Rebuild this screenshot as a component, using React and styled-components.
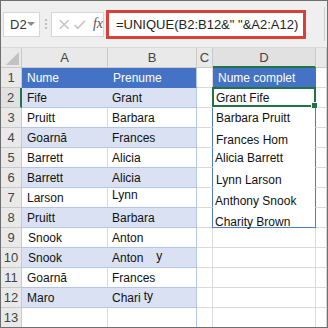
import React from "react";
import styled, { createGlobalStyle } from "styled-components";

const GlobalStyle = createGlobalStyle`
  body {
    margin: 0;
    background: #fff;
    font-family: "Liberation Sans", Arial, sans-serif;
  }
`;

const Frame = styled.div`
  width: 328px;
  height: 328px;
  box-sizing: border-box;
  border: 1px solid #6f6f6f;
  overflow: hidden;
  background: #fff;
  display: flex;
  flex-direction: column;
`;

const FormulaBar = styled.div`
  height: 47px;
  flex-shrink: 0;
  box-sizing: border-box;
  background: #efefef;
  display: flex;
  align-items: center;
  padding-left: 2px;
  border-bottom: 1px solid #dadada;
`;

const NameBox = styled.div`
  width: 37px;
  height: 25px;
  box-sizing: border-box;
  background: #fff;
  border: 1px solid #d6d6d6;
  display: flex;
  align-items: center;
  justify-content: space-between;
  padding: 0 4px 0 6px;
  font-size: 13px;
  color: #333;
`;

const Caret = styled.span`
  width: 0;
  height: 0;
  border-left: 4px solid transparent;
  border-right: 4px solid transparent;
  border-top: 4px solid #8a8a8a;
`;

const Dots = styled.div`
  width: 11px;
  display: flex;
  flex-direction: column;
  align-items: center;
  gap: 2px;
  span {
    width: 2px;
    height: 2px;
    background: #bdbdbd;
  }
`;

const FxBox = styled.div`
  width: 53px;
  height: 25px;
  box-sizing: border-box;
  background: #fff;
  border: 1px solid #d6d6d6;
  display: flex;
  align-items: center;
  padding-left: 6px;
  gap: 3px;
`;

const Fx = styled.span`
  font-family: "Liberation Serif", "Times New Roman", serif;
  font-style: italic;
  font-size: 14px;
  color: #555;
  margin-left: 3px;
`;

const FormulaBox = styled.div`
  width: 200px;
  height: 29px;
  margin-left: 2px;
  box-sizing: border-box;
  background: #fff;
  border: 3px solid #d8413a;
  display: flex;
  align-items: center;
  padding-left: 7px;
  font-size: 13px;
  color: #222;
  white-space: nowrap;
`;

const BarTail = styled.div`
  flex: 1;
  align-self: stretch;
  border-right: 1px solid #d0d0d0;
  margin: 6px 2px 6px 0;
`;

const Grid = styled.div`
  display: grid;
  grid-template-columns: 21px 86px 89px 16px 103px 1fr;
  grid-auto-rows: 20px;
`;

const Corner = styled.div`
  background: #e9e9e9;
  border-right: 1px solid #c9c9c9;
  border-bottom: 1px solid #c9c9c9;
  position: relative;
  &::after {
    content: "";
    position: absolute;
    right: 2px;
    bottom: 2px;
    border-left: 13px solid transparent;
    border-bottom: 13px solid #c2c2c2;
  }
`;

const ColHead = styled.div`
  background: ${(p) => (p.$selected ? "#e1e1e1" : "#e9e9e9")};
  border-right: 1px solid #c9c9c9;
  border-bottom: ${(p) => (p.$selected ? "2px solid #217346" : "1px solid #c9c9c9")};
  box-sizing: border-box;
  display: flex;
  align-items: center;
  justify-content: center;
  font-size: 13px;
  color: #444;
`;

const RowHead = styled.div`
  background: ${(p) => (p.$selected ? "#e1e1e1" : "#e9e9e9")};
  border-right: ${(p) => (p.$selected ? "2px solid #217346" : "1px solid #c9c9c9")};
  border-bottom: 1px solid #c9c9c9;
  box-sizing: border-box;
  display: flex;
  align-items: center;
  justify-content: center;
  font-size: 13px;
  color: #444;
`;

const Cell = styled.div`
  box-sizing: border-box;
  display: flex;
  align-items: flex-end;
  padding: 0 0 2px ${(p) => p.$pad ?? 4}px;
  font-size: 12px;
  line-height: 14px;
  white-space: nowrap;
  color: #111;
  background: #fff;
  border-right: 1px solid #dadada;
  border-bottom: 1px solid #dadada;
`;

const TableCell = styled(Cell)`
  background: ${(p) => (p.$head ? "#4472c4" : p.$band ? "#d9e1f2" : "#fff")};
  color: ${(p) => (p.$head ? "#fff" : "#111")};
  border-bottom: 1px solid ${(p) => (p.$head ? "#4472c4" : "#b4c6e7")};
  border-right: 1px solid
    ${(p) => (p.$last ? "#b4c6e7" : p.$head ? "#4472c4" : p.$band ? "#d9e1f2" : "#dadada")};
`;

const SpillCell = styled(Cell)`
  border-left: 1px solid #4f7ac7;
  border-right: 1px solid #4f7ac7;
  border-bottom: 1px solid ${(p) => (p.$end ? "#4f7ac7" : "#fff")};
  margin-left: -1px;
  padding-left: ${(p) => p.$pad ?? 3}px;
  position: relative;
`;

const Selection = styled.div`
  position: absolute;
  left: -1px;
  top: -1px;
  right: -1px;
  bottom: 0;
  border: 2px solid #217346;
  pointer-events: none;
  &::after {
    content: "";
    position: absolute;
    right: -4px;
    bottom: -4px;
    width: 5px;
    height: 5px;
    background: #217346;
    border: 1px solid #fff;
  }
`;

const Shift = styled.span`
  position: relative;
`;

const rows = [
  { a: "Fife", b: "Grant", d: "Grant Fife" },
  { a: "Pruitt", b: "Barbara", d: "Barbara Pruitt", dd: 0 },
  { a: "Goarnă", b: "Frances", d: "Frances Hom", dd: 2 },
  { a: "Barrett", b: "Alicia", d: "Alicia Barrett", dd: 0, dp: 2 },
  { a: "Barrett", b: "Alicia", d: "Lynn Larson", dd: 2 },
  { a: "Larson", b: "Lynn", by: -3, d: "Anthony Snook", dd: 3, dp: 2 },
  { a: "Pruitt", b: "Barbara", d: "Charity Brown", dd: 4, dp: 2 },
  { a: "Snook", ap: 6, b: "Anton" },
  { a: "Snook", ap: 6, b: "Anton", tail: "y" },
  { a: "Goarnă", b: "Frances" },
  { a: "Maro", b: "Chari", tail2: "ty" },
  { a: "", b: "" },
];

export default function App() {
  return (
    <>
      <GlobalStyle />
      <Frame>
        <FormulaBar>
          <NameBox>
            D2 <Caret />
          </NameBox>
          <Dots>
            <span />
            <span />
            <span />
          </Dots>
          <FxBox>
            <svg width="13" height="13" viewBox="0 0 13 13">
              <path d="M2 2 L11 11 M11 2 L2 11" stroke="#c4c4c4" strokeWidth="1.6" />
            </svg>
            <svg width="14" height="13" viewBox="0 0 14 13">
              <path d="M1.5 7 L5 10.5 L12.5 2.5" stroke="#c4c4c4" strokeWidth="1.6" fill="none" />
            </svg>
            <Fx>fx</Fx>
          </FxBox>
          <FormulaBox>=UNIQUE(B2:B12&amp;" "&amp;A2:A12)</FormulaBox>
          <BarTail />
        </FormulaBar>
        <Grid>
          <Corner />
          <ColHead>A</ColHead>
          <ColHead>B</ColHead>
          <ColHead>C</ColHead>
          <ColHead $selected>D</ColHead>
          <ColHead />

          <RowHead>1</RowHead>
          <TableCell $head $pad={5}>Nume</TableCell>
          <TableCell $head $last $pad={5}>Prenume</TableCell>
          <Cell />
          <TableCell $head $pad={5}>Nume complet</TableCell>
          <Cell />

          {rows.map((r, i) => {
            const n = i + 2;
            const band = n % 2 === 0;
            const inSpill = n <= 8;
            return (
              <React.Fragment key={n}>
                <RowHead $selected={n === 2}>{n}</RowHead>
                <TableCell $band={band} $pad={r.ap ?? 5}>
                  {r.a}
                </TableCell>
                <TableCell $band={band} $last $pad={4}>
                  <Shift style={{ top: r.by ?? 0 }}>{r.b}</Shift>
                  {r.tail && <Shift style={{ marginLeft: 13, top: -2 }}>{r.tail}</Shift>}
                  {r.tail2 && <Shift style={{ marginLeft: 3, top: -2 }}>{r.tail2}</Shift>}
                </TableCell>
                <Cell />
                {inSpill ? (
                  <SpillCell $end={n === 8} $pad={r.dp ?? 3}>
                    <Shift style={{ top: r.dd ?? 0 }}>{r.d}</Shift>
                    {n === 2 && <Selection />}
                  </SpillCell>
                ) : (
                  <Cell />
                )}
                <Cell />
              </React.Fragment>
            );
          })}
        </Grid>
      </Frame>
    </>
  );
}
